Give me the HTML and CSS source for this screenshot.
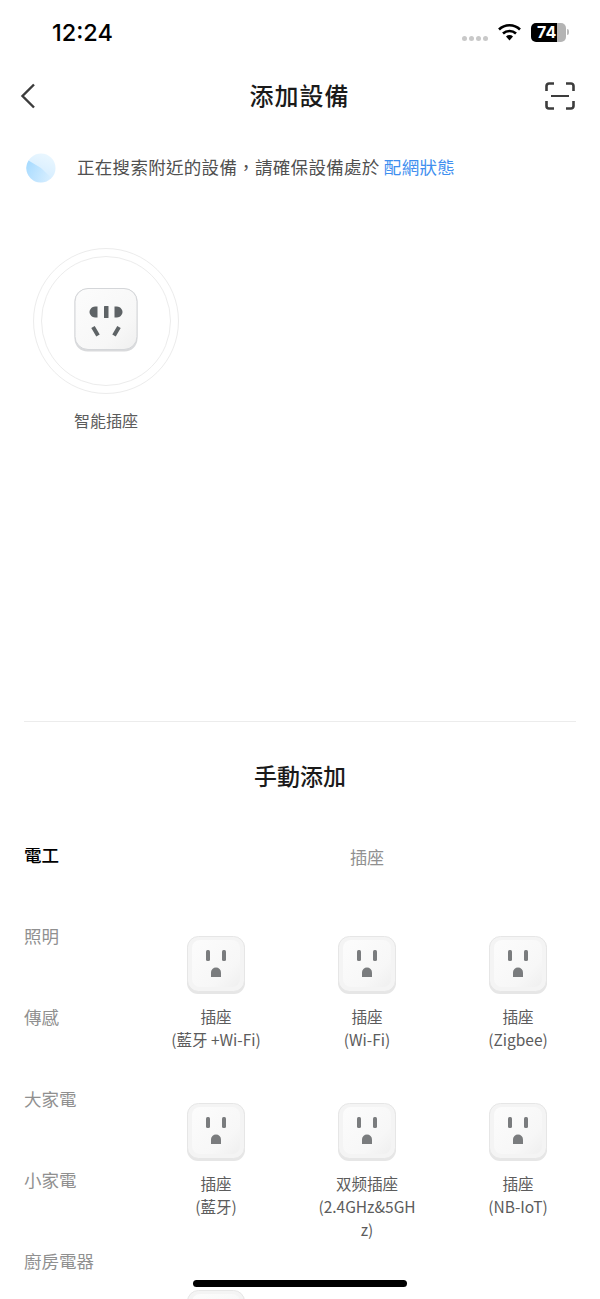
FILE: index.html
```html
<!DOCTYPE html>
<html>
<head>
    <title>添加設備</title>
    <link rel="stylesheet" href="styles.css">
</head>
<body>
    <svg class="defs" width="0" height="0">
        <defs>
            <linearGradient id="plate" x1="0" y1="0" x2="1" y2="1">
                <stop offset="0" stop-color="#fcfcfc"/>
                <stop offset="0.7" stop-color="#f7f7f7"/>
                <stop offset="1" stop-color="#efefef"/>
            </linearGradient>
            <linearGradient id="scan" x1="0.7" y1="0" x2="0.3" y2="1">
                <stop offset="0" stop-color="#eaf7ff"/>
                <stop offset="1" stop-color="#cfeaff"/>
            </linearGradient>
            <linearGradient id="scan-wedge" x1="0" y1="0.3" x2="0.9" y2="0.9">
                <stop offset="0" stop-color="#aadcff"/>
                <stop offset="1" stop-color="#aadcff" stop-opacity="0"/>
            </linearGradient>
            <symbol id="socket-us" viewBox="0 0 58 58">
                <rect x="0" y="2" width="58" height="56" rx="11" fill="#e6e6e6"/>
                <rect x="0.500" y="0.500" width="57" height="55" rx="11" fill="#f4f4f4" stroke="#e6e6e6"/>
                <rect x="5" y="4" width="48" height="47" rx="8" fill="url(#plate)"/>
                <rect x="19" y="14" width="4" height="11" rx="1.500" fill="#7a7c7e"/>
                <rect x="35" y="14" width="4" height="11" rx="1.500" fill="#7a7c7e"/>
                <path d="M24 41v-4.500a5 5 0 0 1 10 0v4.500z" fill="#7a7c7e"/>
            </symbol>
        </defs>
    </svg>

    <div class="status-bar">
        <span class="time">12:24</span>
        <div class="status-icons">
            <div class="signal"><i></i><i></i><i></i><i></i></div>
            <svg class="wifi" width="23" height="18" viewBox="0 0 23 18">
                <path d="M1 6.500a15 15 0 0 1 21 0" fill="none" stroke="#000" stroke-width="2.600"/>
                <path d="M5 10.500a9.500 9.500 0 0 1 13 0" fill="none" stroke="#000" stroke-width="2.600"/>
                <path d="M8 13.500l3.500 4 3.500-4a5 5 0 0 0-7 0z" fill="#000"/>
            </svg>
            <div class="battery"><span class="level">74</span></div>
            <i class="battery-tip"></i>
        </div>
    </div>

    <div class="nav-bar">
        <svg class="back" width="16" height="26" viewBox="0 0 16 26">
            <path d="M14 1.500L2.500 13 14 24.500" fill="none" stroke="#3c3c3c" stroke-width="2.400"/>
        </svg>
        <h1>添加設備</h1>
        <svg width="30" height="28" viewBox="0 0 30 28">
            <path d="M1.500 9V4a2.500 2.500 0 0 1 2.500-2.500h5M21 1.500h5a2.500 2.500 0 0 1 2.500 2.500v5M1.500 19v5a2.500 2.500 0 0 0 2.500 2.500h5M21 26.500h5a2.500 2.500 0 0 0 2.500-2.500v-5" fill="none" stroke="#3c3c3c" stroke-width="2.600"/>
            <path d="M6 14h18" stroke="#3c3c3c" stroke-width="2"/>
        </svg>
    </div>

    <div class="search-row">
        <svg width="30" height="30" viewBox="0 0 30 30">
            <circle cx="15" cy="15" r="14.500" fill="url(#scan)"/>
            <path d="M15 15L2.500 7.500A14.500 14.500 0 0 0 15 29.500 14.500 14.500 0 0 0 25.500 25z" fill="url(#scan-wedge)"/>
        </svg>
        <p>正在搜索附近的設備，請確保設備處於 <a>配網狀態</a></p>
    </div>

    <div class="found">
        <div class="found-item">
            <div class="rings">
                <div class="ring-inner">
                    <svg class="found-icon" width="64" height="64" viewBox="0 0 64 64">
                        <rect x="0.500" y="0.500" width="63" height="63" rx="13" fill="#d9dadc"/>
                        <rect x="1" y="0.500" width="62" height="61" rx="13" fill="url(#plate)" stroke="#d4d6d9"/>
                        <path d="M23.500 18.500v11h-2.500c-3 0-5.500-3-5.500-5.500s2.500-5.500 5.500-5.500z" fill="#5e6366"/>
                        <rect x="30" y="18" width="4.500" height="12" rx="0.500" fill="#5e6366"/>
                        <path d="M40.500 18.500v11h2.500c3 0 5.500-3 5.500-5.500s-2.500-5.500-5.500-5.500z" fill="#5e6366"/>
                        <path d="M19 39l5 8.500M45 39l-5 8.500" stroke="#5e6366" stroke-width="4"/>
                    </svg>
                </div>
            </div>
            <span>智能插座</span>
        </div>
    </div>

    <div class="manual">
        <h2>手動添加</h2>
        <div class="manual-body">
            <ul class="categories">
                <li class="active">電工</li>
                <li>照明</li>
                <li>傳感</li>
                <li>大家電</li>
                <li>小家電</li>
                <li>廚房電器</li>
            </ul>
            <div class="devices">
                <div class="devices-title">插座</div>
                <div class="device-grid">
                    <div class="device">
                        <svg width="58" height="58"><use href="#socket-us"/></svg>
                        <p>插座<br>(藍牙 +Wi-Fi)</p>
                    </div>
                    <div class="device">
                        <svg width="58" height="58"><use href="#socket-us"/></svg>
                        <p>插座<br>(Wi-Fi)</p>
                    </div>
                    <div class="device">
                        <svg width="58" height="58"><use href="#socket-us"/></svg>
                        <p>插座<br>(Zigbee)</p>
                    </div>
                    <div class="device">
                        <svg width="58" height="58"><use href="#socket-us"/></svg>
                        <p>插座<br>(藍牙)</p>
                    </div>
                    <div class="device">
                        <svg width="58" height="58"><use href="#socket-us"/></svg>
                        <p>双频插座<br>(2.4GHz&amp;5GHz)</p>
                    </div>
                    <div class="device">
                        <svg width="58" height="58"><use href="#socket-us"/></svg>
                        <p>插座<br>(NB-IoT)</p>
                    </div>
                    <div class="device">
                        <svg width="58" height="58"><use href="#socket-us"/></svg>
                    </div>
                </div>
            </div>
        </div>
    </div>

    <div class="home-indicator"></div>
</body>
</html>
```

FILE: styles.css
```css
:root {
    --text-dark: #1a1a1a;
    --text-mid: #5c5c5c;
    --text-light: #909090;
    --link: #3f8fef;
    --line: #ececec;
}

html, body {
    height: 1299px;
    overflow: hidden;
}

body {
    position: relative;
    margin: 0;
    background-color: #fff;
    font-family: "Noto Sans CJK TC", "Noto Sans", sans-serif;
    color: var(--text-dark);
}

.defs {
    position: absolute;
}

.status-bar {
    height: 64px;
    display: flex;
    justify-content: space-between;
    align-items: center;
    padding: 0 31px 0 52px;
}

.time {
    font-family: Inter, sans-serif;
    font-size: 23.500px;
    font-weight: 500;
    color: #000;
}

.status-icons {
    display: flex;
    align-items: center;
}

.signal {
    display: flex;
    gap: 2px;
    margin: 12px 10px 0 0;
}

.signal i {
    width: 5px;
    height: 5px;
    border-radius: 50%;
    background-color: #c9c9c9;
}

.wifi {
    margin-right: 10px;
}

.battery {
    width: 35px;
    height: 19px;
    border-radius: 5px;
    overflow: hidden;
    background: linear-gradient(to right, #000 74%, #b4b4b4 74%);
}

.level {
    display: block;
    padding-left: 6px;
    font-family: Inter, sans-serif;
    font-size: 16px;
    font-weight: 700;
    line-height: 19px;
    color: #fff;
}

.battery-tip {
    width: 2px;
    height: 6px;
    margin-left: 1px;
    border-radius: 0 2px 2px 0;
    background-color: #bbb;
}

.nav-bar {
    height: 64px;
    display: flex;
    justify-content: space-between;
    align-items: center;
    padding: 0 25px 0 20px;
}

.back {
    margin-right: 18px;
}

.nav-bar h1 {
    margin: 0 0 4px;
    font-size: 24px;
    font-weight: 500;
    letter-spacing: 1px;
}

.search-row {
    display: flex;
    align-items: center;
    gap: 21px;
    margin-top: 25px;
    padding-left: 26px;
    height: 30px;
}

.search-row p {
    margin: 0 0 4px;
    font-size: 17.500px;
    letter-spacing: 0.3px;
    color: #505050;
    white-space: nowrap;
}

.search-row a {
    color: var(--link);
}

.found {
    height: 538px;
    padding: 65px 0 0 24px;
    box-sizing: border-box;
}

.found-item {
    width: 164px;
    display: flex;
    flex-direction: column;
    align-items: center;
    gap: 14px;
    font-size: 16px;
    color: var(--text-mid);
}

.rings {
    width: 146px;
    height: 146px;
    box-sizing: border-box;
    border: 1px solid var(--line);
    border-radius: 50%;
    display: flex;
    justify-content: center;
    align-items: center;
}

.ring-inner {
    width: 130px;
    height: 130px;
    box-sizing: border-box;
    border: 1px solid var(--line);
    border-radius: 50%;
    display: flex;
    justify-content: center;
    align-items: center;
}

.found-icon {
    margin-bottom: 2px;
}

.manual {
    margin: 0 24px;
    border-top: 1px solid var(--line);
}

.manual h2 {
    margin: 35px 0 0;
    font-size: 23px;
    font-weight: 500;
    line-height: 36px;
    text-align: center;
}

.manual-body {
    display: flex;
    margin-top: 49px;
}

.categories {
    width: 116.500px;
    flex-shrink: 0;
    margin: 0;
    padding: 0;
    list-style: none;
    font-size: 17.500px;
    color: var(--text-light);
}

.categories li {
    height: 81.200px;
    line-height: 26px;
}

.categories .active {
    font-weight: 500;
    color: #000;
}

.devices {
    width: 453px;
}

.devices-title {
    padding-top: 2px;
    font-size: 17px;
    line-height: 26px;
    text-align: center;
    color: var(--text-light);
}

.device-grid {
    display: grid;
    grid-template-columns: repeat(3, 151px);
    margin-top: 66px;
}

.device {
    display: flex;
    flex-direction: column;
    align-items: center;
    height: 167px;
}

.device:nth-child(n+4) {
    height: 187px;
}

.device p {
    width: 104px;
    margin: 11px 0 0;
    font-size: 15.500px;
    line-height: 23px;
    text-align: center;
    word-break: break-all;
    color: var(--text-mid);
}

.home-indicator {
    position: absolute;
    left: 193px;
    top: 1280px;
    width: 214px;
    height: 7px;
    border-radius: 4px;
    background-color: #000;
}
```
